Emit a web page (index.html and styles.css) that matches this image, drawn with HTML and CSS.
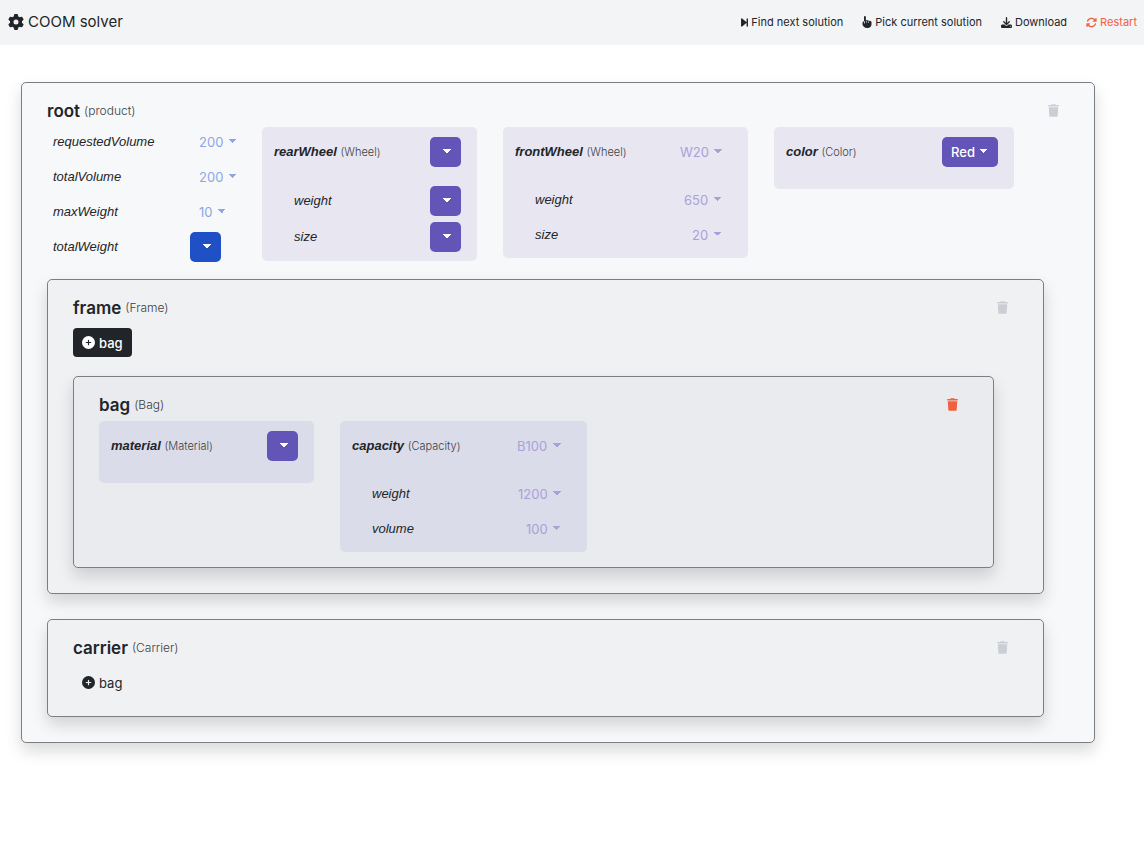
FILE: index.html
```html
<!DOCTYPE html>
<html lang="en">
<head>
<meta charset="utf-8">
<meta name="viewport" content="width=device-width, initial-scale=1">
<title>COOM solver</title>
<link rel="stylesheet" href="styles.css">
</head>
<body>
<svg class="sprite" aria-hidden="true">
  <symbol id="trash" viewBox="0 0 448 512"><path d="M135 18c5-11 16-18 29-18h120c13 0 24 7 29 18l7 14h96c18 0 32 10 32 28s-14 28-32 28H32C14 88 0 78 0 60s14-28 32-28h96zM32 120h384l-21 347c-2 25-23 45-48 45H101c-25 0-46-20-48-45z"/></symbol>
  <symbol id="plus" viewBox="0 0 512 512"><path fill-rule="evenodd" d="M256 0a256 256 0 1 1 0 512a256 256 0 1 1 0-512zM232 344c0 13 11 24 24 24s24-11 24-24v-64h64c13 0 24-11 24-24s-11-24-24-24h-64v-64c0-13-11-24-24-24s-24 11-24 24v64h-64c-13 0-24 11-24 24s11 24 24 24h64z"/></symbol>
</svg>

<header class="navbar">
  <h1 class="brand">
    <svg class="brand-icon" viewBox="0 0 512 512" aria-hidden="true"><path d="M495.9 166.6c3.2 8.7 .5 18.4-6.4 24.6l-43.3 39.4c1.1 8.3 1.7 16.8 1.7 25.4s-.6 17.1-1.7 25.4l43.3 39.4c6.9 6.2 9.6 15.9 6.4 24.6c-4.4 11.9-9.7 23.3-15.8 34.3l-4.7 8.1c-6.6 11-14 21.4-22.1 31.2c-5.9 7.2-15.7 9.6-24.5 6.8l-55.7-17.7c-13.4 10.3-28.2 18.9-44 25.4l-12.5 57.1c-2 9.1-9 16.3-18.2 17.8c-13.8 2.3-28 3.5-42.5 3.5s-28.7-1.2-42.5-3.5c-9.2-1.5-16.2-8.7-18.2-17.8l-12.5-57.1c-15.8-6.5-30.6-15.1-44-25.4L83.1 425.9c-8.8 2.8-18.6 .3-24.5-6.8c-8.1-9.8-15.5-20.2-22.1-31.2l-4.7-8.1c-6.1-11-11.4-22.4-15.8-34.3c-3.2-8.7-.5-18.4 6.4-24.6l43.3-39.4C64.6 273.1 64 264.6 64 256s.6-17.1 1.7-25.4L22.4 191.2c-6.9-6.2-9.6-15.9-6.4-24.6c4.4-11.9 9.7-23.3 15.8-34.3l4.7-8.1c6.6-11 14-21.4 22.1-31.2c5.9-7.2 15.7-9.6 24.5-6.8l55.7 17.7c13.4-10.3 28.2-18.9 44-25.4l12.5-57.1c2-9.1 9-16.3 18.2-17.8C227.3 1.2 241.5 0 256 0s28.7 1.2 42.5 3.5c9.2 1.5 16.2 8.7 18.2 17.8l12.5 57.1c15.8 6.5 30.6 15.1 44 25.4l55.7-17.7c8.8-2.8 18.6-.3 24.5 6.8c8.1 9.8 15.5 20.2 22.1 31.2l4.7 8.1c6.1 11 11.4 22.4 15.8 34.3zM256 336a80 80 0 1 0 0-160 80 80 0 1 0 0 160z"/></svg>
    COOM solver
  </h1>
  <nav class="actions">
    <button class="action" type="button"><svg class="icon-step" viewBox="0 0 320 416" aria-hidden="true"><path d="M52 23C31 6 0 20 0 48v320c0 28 31 42 52 25l192-160 12-10v145c0 18 14 32 32 32s32-14 32-32V48c0-18-14-32-32-32s-32 14-32 32v145l-12-10z"/></svg>Find next solution</button>
    <button class="action" type="button"><svg class="icon-hand" viewBox="0 0 384 512" aria-hidden="true"><path d="M64 40a40 40 0 0 1 80 0v150c10-12 24-18 40-18 22 0 40 12 48 30 8-6 18-10 28-10 22 0 40 14 46 34 8-6 16-8 26-8 28 0 52 22 52 50v84c0 88-72 160-160 160h-42c-42 0-83-17-113-47l-40-40C10 406 0 380 0 352v-48c0-42 28-72 64-76v76c0 9 7 16 16 16s16-7 16-16v-80h-32zM168 212v66c0 8 5 14 12 14s12-6 12-14v-66c0-7-5-12-12-12s-12 5-12 12zM244 232v54c0 8 5 14 12 14s12-6 12-14v-54c0-7-5-12-12-12s-12 5-12 12z" fill-rule="evenodd"/></svg>Pick current solution</button>
    <button class="action" type="button"><svg class="icon-nav" viewBox="0 0 512 512" aria-hidden="true"><path d="M288 32c0-17.7-14.3-32-32-32s-32 14.3-32 32V274.7l-73.4-73.4c-12.5-12.5-32.8-12.5-45.3 0s-12.5 32.8 0 45.3l128 128c12.5 12.5 32.8 12.5 45.3 0l128-128c12.5-12.5 12.5-32.8 0-45.3s-32.8-12.5-45.3 0L288 274.7V32zM64 352c-35.3 0-64 28.7-64 64v32c0 35.3 28.7 64 64 64H448c35.3 0 64-28.7 64-64V416c0-35.3-28.7-64-64-64H346.5l-45.3 45.3c-25 25-65.5 25-90.5 0L165.5 352H64zm368 56a24 24 0 1 1 0 48 24 24 0 1 1 0-48z"/></svg>Download</button>
    <button class="action danger" type="button"><svg class="icon-nav" viewBox="0 0 512 512" aria-hidden="true"><path d="M105.1 202.6c7.7-21.8 20.2-42.3 37.8-59.8c62.5-62.5 163.8-62.5 226.3 0L386.3 160H352c-17.7 0-32 14.3-32 32s14.3 32 32 32H463.5c17.7 0 32-14.3 32-32V80c0-17.7-14.3-32-32-32s-32 14.3-32 32v35.2L414.4 97.6c-87.5-87.5-229.3-87.5-316.8 0C73.2 122 55.6 150.7 44.8 181.4c-5.9 16.7 2.9 34.9 19.5 40.8s34.9-2.9 40.8-19.5zM39 289.3c-5 1.5-9.8 4.2-13.7 8.2c-4 4-6.7 8.8-8.1 14c-.3 1.2-.6 2.5-.8 3.8c-.3 1.7-.4 3.4-.4 5.1V432c0 17.7 14.3 32 32 32s32-14.3 32-32V396.9l17.6 17.5c87.5 87.4 229.3 87.4 316.7 0c24.4-24.4 42.1-53.1 52.9-83.7c5.9-16.7-2.9-34.9-19.5-40.8s-34.9 2.9-40.8 19.5c-7.7 21.8-20.2 42.3-37.8 59.8c-62.5 62.5-163.8 62.5-226.3 0l-.1-.1L125.6 352H160c17.7 0 32-14.3 32-32s-14.3-32-32-32H48.4c-1.6 0-3.2 .1-4.8 .3s-3.1 .5-4.6 1z"/></svg>Restart</button>
  </nav>
</header>

<main class="page">
  <section class="object level-1">
    <div class="object-head">
      <h2 class="title">root <span class="type">(product)</span></h2>
      <button class="remove" type="button" aria-label="Remove root" disabled><svg class="icon-trash"><use href="#trash"/></svg></button>
    </div>
    <div class="features">
      <div class="list">
        <div class="row"><label class="name" for="requested-volume">requestedVolume</label><select class="pick set" id="requested-volume"><option>200</option></select></div>
        <div class="row"><label class="name" for="total-volume">totalVolume</label><select class="pick set" id="total-volume"><option>200</option></select></div>
        <div class="row"><label class="name" for="max-weight">maxWeight</label><select class="pick set" id="max-weight"><option>10</option></select></div>
        <div class="row"><label class="name" for="total-weight">totalWeight</label><select class="pick open empty" id="total-weight"><option></option></select></div>
      </div>
      <div class="card">
        <div class="row head"><label class="name" for="rear"><b>rearWheel</b> <span class="type">(Wheel)</span></label><select class="pick open empty" id="rear"><option></option></select></div>
        <div class="row sub"><label class="name" for="rear-weight">weight</label><select class="pick open empty" id="rear-weight"><option></option></select></div>
        <div class="row sub"><label class="name" for="rear-size">size</label><select class="pick open empty" id="rear-size"><option></option></select></div>
      </div>
      <div class="card">
        <div class="row head"><label class="name" for="front"><b>frontWheel</b> <span class="type">(Wheel)</span></label><select class="pick set" id="front"><option>W20</option></select></div>
        <div class="row sub"><label class="name" for="front-weight">weight</label><select class="pick set" id="front-weight"><option>650</option></select></div>
        <div class="row sub"><label class="name" for="front-size">size</label><select class="pick set" id="front-size"><option>20</option></select></div>
      </div>
      <div class="card">
        <div class="row head"><label class="name" for="color"><b>color</b> <span class="type">(Color)</span></label><select class="pick open" id="color"><option>Red</option></select></div>
      </div>
    </div>

    <section class="object level-2">
      <div class="object-head">
        <h2 class="title">frame <span class="type">(Frame)</span></h2>
        <button class="remove" type="button" aria-label="Remove frame" disabled><svg class="icon-trash"><use href="#trash"/></svg></button>
      </div>
      <div class="adders"><button class="add solid" type="button"><svg class="icon-plus" aria-hidden="true"><use href="#plus"/></svg>bag</button></div>

      <section class="object level-3">
        <div class="object-head">
          <h2 class="title">bag <span class="type">(Bag)</span></h2>
          <button class="remove danger" type="button" aria-label="Remove bag"><svg class="icon-trash"><use href="#trash"/></svg></button>
        </div>
        <div class="features">
          <div class="card">
            <div class="row head"><label class="name" for="material"><b>material</b> <span class="type">(Material)</span></label><select class="pick open empty" id="material"><option></option></select></div>
          </div>
          <div class="card">
            <div class="row head"><label class="name" for="capacity"><b>capacity</b> <span class="type">(Capacity)</span></label><select class="pick set" id="capacity"><option>B100</option></select></div>
            <div class="row sub"><label class="name" for="cap-weight">weight</label><select class="pick set" id="cap-weight"><option>1200</option></select></div>
            <div class="row sub"><label class="name" for="cap-volume">volume</label><select class="pick set" id="cap-volume"><option>100</option></select></div>
          </div>
        </div>
      </section>
    </section>

    <section class="object level-2">
      <div class="object-head">
        <h2 class="title">carrier <span class="type">(Carrier)</span></h2>
        <button class="remove" type="button" aria-label="Remove carrier" disabled><svg class="icon-trash"><use href="#trash"/></svg></button>
      </div>
      <div class="adders"><button class="add" type="button"><svg class="icon-plus" aria-hidden="true"><use href="#plus"/></svg>bag</button></div>
    </section>
  </section>
</main>
</body>
</html>
```

FILE: styles.css
```css
* {
  box-sizing: border-box;
}

body {
  margin: 0;
  background: #fff;
  color: #212529;
  font-family: Inter, "Liberation Sans", sans-serif;
  font-size: 13px;
  line-height: 20px;
}

button,
select {
  margin: 0;
  border: 0;
  background: none;
  color: inherit;
  font: inherit;
}

svg {
  fill: currentColor;
  flex: none;
}

.sprite {
  display: none;
}

/* Top bar */
.navbar {
  display: flex;
  align-items: center;
  justify-content: space-between;
  flex-wrap: wrap;
  min-height: 45px;
  padding: 0 7px 1px 8px;
  background: #f3f4f6;
}

.brand {
  display: flex;
  align-items: center;
  gap: 4px;
  margin: 0;
  font-size: 15px;
  font-weight: 400;
}

.brand-icon {
  width: 16px;
  height: 16px;
}

.actions {
  display: flex;
  flex-wrap: wrap;
  gap: 19px;
}

.action {
  display: flex;
  align-items: center;
  gap: 3px;
  padding: 0;
  font-size: 11px;
}

.danger {
  color: #f0613f;
}

.icon-step {
  width: 7px;
  height: 9px;
}

.icon-hand {
  width: 10px;
  height: 12px;
}

.icon-nav {
  width: 11px;
  height: 11px;
}

/* Nested objects */
.page {
  padding: 37px 21px;
}

.object {
  width: 97.5%;
  margin-bottom: 25px;
  padding: 15px 25px 0;
  border: 1px solid #7b7e82;
  border-radius: 5px;
  box-shadow: 0 8px 16px rgba(0, 0, 0, 0.15);
}

.level-1 {
  background: #f7f8fa;
}

.level-2 {
  background: #f0f1f3;
}

.level-3 {
  background: #eaebee;
}

.object-head {
  display: flex;
  align-items: center;
  justify-content: space-between;
  height: 25px;
}

.title {
  display: flex;
  align-items: center;
  gap: 4px;
  margin: 0;
  font-size: 17px;
  font-weight: 600;
}

.type {
  color: #3c4045;
  font-family: Inter, "Liberation Sans", sans-serif;
  font-size: 12px;
  font-style: normal;
  font-weight: 300;
}

.remove {
  display: flex;
  padding: 5px 10px;
}

.remove:disabled {
  color: #cbced5;
}

.icon-trash {
  width: 11px;
  height: 13px;
}

.features {
  display: flex;
  flex-wrap: wrap;
  align-items: flex-start;
  gap: 15px;
  padding: 1px 0 14px;
}

.list {
  padding-left: 6px;
}

.card {
  margin: 3px 11px 1px 0;
  padding: 7px 16px 6px 12px;
  border-radius: 5px;
  background: #e8e7f1;
}

.level-3 .card {
  background: #dbdce9;
}

.row {
  display: flex;
  align-items: center;
  padding: 3px 0;
}

.head {
  margin-bottom: 13px;
}

.name {
  flex: none;
  width: 137px;
  font-family: "Liberation Sans", Arial, sans-serif;
  font-style: italic;
}

.name b {
  font-weight: 700;
}

.card .name {
  width: 156px;
}

.card .sub .name {
  padding-left: 20px;
}

.name .type {
  font-size: 11px;
}

/* Value pickers: the caret is two mirrored corner gradients */
.pick {
  appearance: none;
  height: 29px;
  padding: 0 23px 0 9px;
  border-radius: 5px;
  background-image:
    linear-gradient(45deg, transparent 50%, currentColor 50%),
    linear-gradient(315deg, transparent 50%, currentColor 50%);
  background-position: right 14px top 12px, right 10px top 12px;
  background-repeat: no-repeat;
  background-size: 4px 4px;
}

.set {
  color: #8fa6e2;
}

.open {
  height: 30px;
  background-color: #1f50c5;
  color: #fff;
  font-weight: 500;
}

.empty {
  width: 31px;
  padding: 0;
}

.card .pick {
  margin-left: auto;
}

.card .set {
  color: #a9a1d8;
}

.card .open {
  background-color: #6355b8;
}

/* Add buttons */
.adders {
  display: flex;
  padding: 8px 0 19px;
}

.add {
  display: flex;
  align-items: center;
  gap: 4px;
  height: 29px;
  padding: 0 9px;
  border-radius: 4px;
}

.solid {
  background: #212529;
  color: #fff;
  font-weight: 500;
}

.icon-plus {
  width: 13px;
  height: 13px;
}
```
